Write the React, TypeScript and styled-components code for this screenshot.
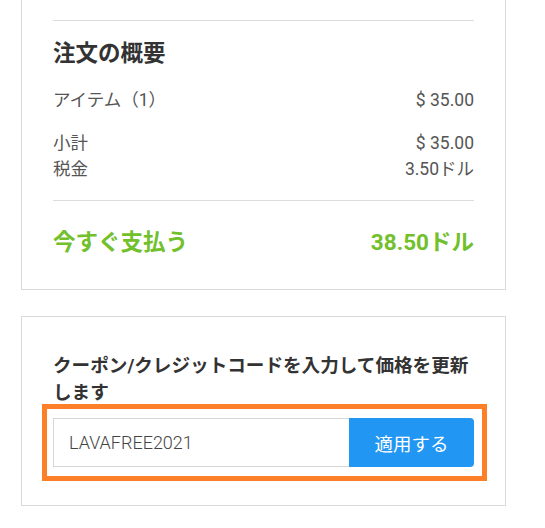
import React from "react";
import styled, { createGlobalStyle } from "styled-components";

const GlobalStyle = createGlobalStyle`
  body {
    margin: 0;
    background: #fff;
    font-family: Roboto, "Noto Sans CJK JP", sans-serif;
  }
`;

const Page = styled.div`
  width: 485px;
  padding-left: 21px;
`;

const Card = styled.section<{ $cut?: boolean; $top?: number; $bottom?: number }>`
  box-sizing: border-box;
  border: 1px solid #dadada;
  border-top: ${(p) => (p.$cut ? "none" : "1px solid #dadada")};
  padding: ${(p) => p.$top ?? 0}px 31px ${(p) => p.$bottom ?? 0}px;
  & + & {
    margin-top: 26px;
  }
`;

const Divider = styled.hr<{ $gap?: number }>`
  border: none;
  border-top: 1px solid #dcdcdc;
  margin: ${(p) => p.$gap ?? 0}px 0 0;
  height: 0;
`;

const Title = styled.h2`
  margin: 16px 0 0;
  font-size: 22.5px;
  line-height: 33px;
  font-weight: 700;
  color: #333;
`;

const Lines = styled.div<{ $gap: number }>`
  margin-top: ${(p) => p.$gap}px;
`;

const Line = styled.div`
  display: flex;
  justify-content: space-between;
  font-size: 17.5px;
  line-height: 26px;
  color: #555;
`;

const TotalLine = styled.div`
  display: flex;
  justify-content: space-between;
  margin-top: 25px;
  font-size: 22.5px;
  line-height: 33px;
  font-weight: 700;
  color: #72c02c;
`;

const CouponTitle = styled.h3`
  margin: 0;
  font-size: 18.6px;
  line-height: 27px;
  font-weight: 700;
  color: #333;
`;

const Highlight = styled.div`
  margin: -3px -13px 0 -11px;
  padding: 9px 8px 9px 6px;
  border: 5px solid #fd7f27;
`;

const InputGroup = styled.div`
  display: flex;
  height: 49px;
`;

const CodeInput = styled.input`
  flex: 1;
  min-width: 0;
  box-sizing: border-box;
  height: 100%;
  margin: 0;
  padding: 0 15px;
  border: 1px solid #d6d6d6;
  border-right: none;
  border-radius: 0;
  font-family: Roboto, "Noto Sans CJK JP", sans-serif;
  font-size: 18px;
  font-weight: 300;
  color: #444;
  outline: none;
`;

const ApplyButton = styled.button`
  width: 125px;
  height: 100%;
  margin: 0;
  border: none;
  border-radius: 0 4px 4px 0;
  background: #2196f3;
  color: #fff;
  font-family: Roboto, "Noto Sans CJK JP", sans-serif;
  font-size: 18.5px;
  cursor: pointer;
`;

export default function App() {
  return (
    <>
      <GlobalStyle />
      <Page>
        <Card $cut $top={20} $bottom={30}>
          <Divider />
          <Title>注文の概要</Title>
          <Lines $gap={17}>
            <Line>
              <span>アイテム（1）</span>
              <span>$ 35.00</span>
            </Line>
          </Lines>
          <Lines $gap={17}>
            <Line>
              <span>小計</span>
              <span>$ 35.00</span>
            </Line>
            <Line>
              <span>税金</span>
              <span>3.50ドル</span>
            </Line>
          </Lines>
          <Divider $gap={18} />
          <TotalLine>
            <span>今すぐ支払う</span>
            <span>38.50ドル</span>
          </TotalLine>
        </Card>
        <Card $top={36} $bottom={24}>
          <CouponTitle>クーポン/クレジットコードを入力して価格を更新します</CouponTitle>
          <Highlight>
            <InputGroup>
              <CodeInput defaultValue="LAVAFREE2021" />
              <ApplyButton>適用する</ApplyButton>
            </InputGroup>
          </Highlight>
        </Card>
      </Page>
    </>
  );
}
